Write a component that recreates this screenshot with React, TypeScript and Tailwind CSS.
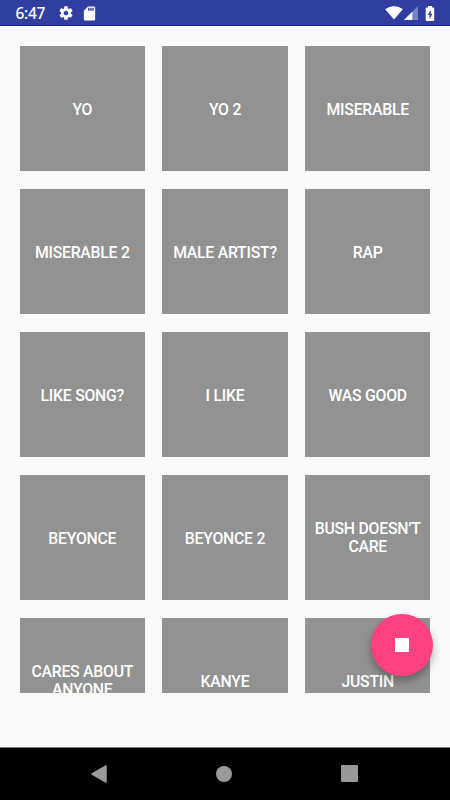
import React from "react";

const labels = [
  "YO", "YO 2", "MISERABLE",
  "MISERABLE 2", "MALE ARTIST?", "RAP",
  "LIKE SONG?", "I LIKE", "WAS GOOD",
  "BEYONCE", "BEYONCE 2", "BUSH DOESN’T CARE",
  "CARES ABOUT ANYONE", "KANYE", "JUSTIN",
];

function StatusBar() {
  return (
    <header className="flex h-[26px] shrink-0 items-center border-b border-[#17218c] bg-[#303f9f] text-white">
      <span className="ml-[15.500px] w-[42px] pt-[2px] font-['Noto_Sans',sans-serif] text-[15.500px] leading-none font-medium tracking-[-0.3px]">6:47</span>
      <svg className="mt-[1px] size-[16px]" viewBox="0 0 24 24" fill="currentColor">
        <path d="M19.43 12.98c.04-.32.07-.64.07-.98s-.03-.66-.07-.98l2.11-1.65c.19-.15.24-.42.12-.64l-2-3.46c-.12-.22-.39-.3-.61-.22l-2.49 1c-.52-.4-1.08-.73-1.69-.98l-.38-2.65C14.46 2.18 14.25 2 14 2h-4c-.25 0-.46.18-.49.42l-.38 2.65c-.61.25-1.17.59-1.69.98l-2.49-1c-.23-.09-.49 0-.61.22l-2 3.46c-.13.22-.07.49.12.64l2.11 1.65c-.04.32-.07.65-.07.98s.03.66.07.98l-2.11 1.65c-.19.15-.24.42-.12.64l2 3.46c.12.22.39.3.61.22l2.49-1c.52.4 1.08.73 1.69.98l.38 2.65c.03.24.24.42.49.42h4c.25 0 .46-.18.49-.42l.38-2.65c.61-.25 1.17-.59 1.69-.98l2.49 1c.23.09.49 0 .61-.22l2-3.46c.12-.22.07-.49-.12-.64l-2.11-1.65zM12 15.5c-1.93 0-3.5-1.57-3.5-3.5s1.57-3.5 3.5-3.5 3.5 1.57 3.5 3.5-1.57 3.5-3.5 3.5z" />
      </svg>
      <svg className="mt-[1px] ml-[7.500px] size-[17px]" viewBox="0 0 24 24" fill="currentColor">
        <path d="M18 2h-8L4.02 8 4 20c0 1.1.9 2 2 2h12c1.1 0 2-.9 2-2V4c0-1.100-.9-2-2-2zm-6 6h-2V4h2v4zm3 0h-2V4h2v4zm3 0h-2V4h2v4z" />
      </svg>
      <svg className="mt-[1px] ml-auto h-[14px] w-[18px]" viewBox="0 0 18 14" fill="currentColor">
        <path d="M.2 3.300C5.500-.9 12.500-.9 17.800 3.300L9 13.500Z" />
      </svg>
      <svg className="mt-[1px] ml-[1px] h-[14px] w-[14px]" viewBox="0 0 14 14" fill="currentColor">
        <path d="M14 0v14H0Z" opacity=".35" />
        <path d="M8.300 5.700V14H0Z" />
      </svg>
      <svg className="mt-[1px] mr-[15.500px] ml-[7px] h-[15px] w-[10px]" viewBox="0 0 10 15">
        <path d="M3 0h4v1.600h1.200c.6 0 1 .4 1 1V14c0 .6-.4 1-1 1H1.700c-.6 0-1-.4-1-1V2.600c0-.6.4-1 1-1H3Z" fill="#fff" />
        <path d="M5.700 4 2.700 8.900h1.800V13l3-5.200H5.700Z" fill="#303f9f" />
      </svg>
    </header>
  );
}

function NavBar() {
  return (
    <nav className="flex h-[53px] shrink-0 items-center justify-between border-t border-[#777] bg-black px-[91px] pb-[1px]">
      <svg className="h-[18px] w-[16px]" viewBox="0 0 16 18">
        <path d="M1 9 15 1v16Z" fill="#999" stroke="#999" strokeWidth="1.500" strokeLinejoin="round" />
      </svg>
      <span className="size-[16px] rounded-full bg-[#999]" />
      <span className="mr-[1px] size-[17px] rounded-[1px] bg-[#999]" />
    </nav>
  );
}

export default function App() {
  return (
    <div className="relative flex h-[800px] w-[450px] flex-col overflow-hidden bg-[#fafafa] font-['Roboto',sans-serif]">
      <StatusBar />
      <main className="min-h-0 flex-1 px-[19.700px] pt-[20px]">
        <div className="grid h-[647px] grid-cols-[repeat(3,125.200px)] auto-rows-[125.200px] content-start justify-between gap-y-[17.700px] overflow-hidden">
          {labels.map((label) => (
            <button key={label} className="flex items-center justify-center bg-[#929292] px-[6px] pt-[3px] text-center text-[15.800px] leading-[18px] font-medium tracking-[-0.25px] text-white nth-[12]:pt-[1.500px] nth-[13]:pt-[1.500px]">
              <span className="max-w-[112px]">{label}</span>
            </button>
          ))}
        </div>
      </main>
      <NavBar />
      <button aria-label="Stop" className="absolute top-[614px] left-[371px] flex size-[61.500px] items-center justify-center rounded-full bg-[#ff4081] shadow-[0_5px_8px_rgba(0,0,0,0.32)]">
        <span className="size-[14px] bg-white" />
      </button>
    </div>
  );
}
